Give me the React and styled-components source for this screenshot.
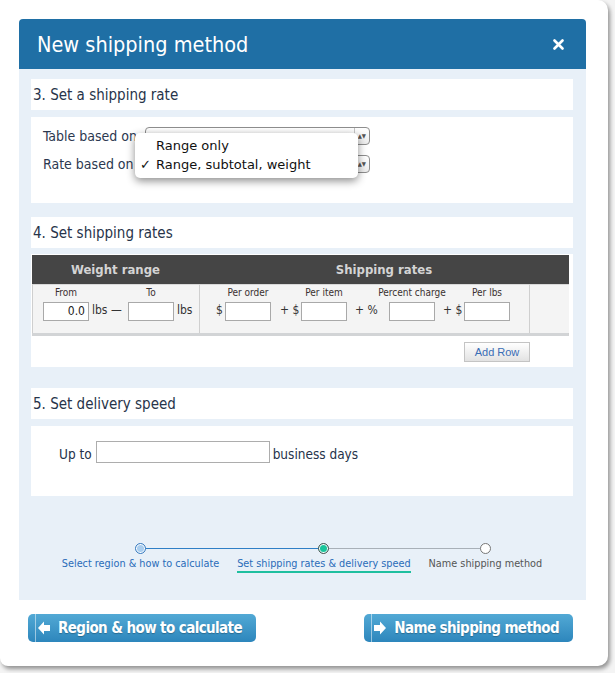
import React from 'react';
import styled, { createGlobalStyle } from 'styled-components';

const GlobalStyle = createGlobalStyle`
  html, body {
    margin: 0;
    padding: 0;
    background: #ececec;
  }
  * {
    box-sizing: border-box;
  }
`;

const UI_FONT = `"DejaVu Sans Condensed", "DejaVu Sans", "Liberation Sans", sans-serif`;

const Page = styled.div`
  position: relative;
  width: 615px;
  height: 673px;
  overflow: hidden;
  background: #f4f4f4;
  font-family: ${UI_FONT};
`;

const Modal = styled.div`
  width: 608px;
  height: 666px;
  background: #fff;
  border-radius: 0 10px 10px 8px;
  box-shadow: 2px 3px 4px rgba(0, 0, 0, 0.4);
  padding: 19px 22px 0 19px;
  display: flex;
  flex-direction: column;
`;

const Header = styled.div`
  height: 50px;
  background: #1f6fa5;
  border-radius: 4px 4px 0 0;
  display: flex;
  align-items: center;
  justify-content: space-between;
  padding: 0 22px 0 18px;
  color: #fff;
`;

const Title = styled.h1`
  margin: 0;
  font-size: 21.5px;
  font-weight: normal;
`;

const Body = styled.div`
  background: #e8f0f8;
  height: 531px;
  padding: 10px 13px 0 12px;
  display: flex;
  flex-direction: column;
`;

const SectionTitle = styled.div`
  background: #fff;
  height: 31px;
  padding-left: 2px;
  display: flex;
  align-items: center;
  font-size: 15px;
  color: #27344a;
  margin-top: ${(p) => p.$top || 0}px;
`;

const SectionBody = styled.div`
  position: relative;
  background: #fff;
  height: ${(p) => p.$height}px;
  margin-top: ${(p) => p.$top || 7}px;
`;

const FormGrid = styled.div`
  display: grid;
  grid-template-columns: 102px 225px;
  row-gap: 10px;
  padding: 10px 0 0 12px;
  align-items: center;
  font-size: 14px;
  color: #2b3850;
`;

const SelectBox = styled.div`
  height: 18px;
  border: 1px solid #8e8e8e;
  border-radius: 4px;
  background: linear-gradient(#ffffff, #ececec);
  display: flex;
  align-items: center;
  padding: 0 2px 0 8px;
`;

const Arrows = styled.span`
  margin-left: auto;
  font-size: 6px;
  line-height: 6px;
  color: #555;
  display: flex;
  flex-direction: column;
  align-items: center;
  justify-content: center;
  border-left: 1px solid #c4c4c4;
  padding: 0 1px 0 3px;
  height: 100%;
`;

const Popup = styled.div`
  position: absolute;
  left: 104px;
  top: 16px;
  width: 223px;
  height: 45px;
  background: #fff;
  border-radius: 5px;
  box-shadow: 0 3px 9px rgba(0, 0, 0, 0.45);
  padding-top: 3px;
  font-family: "DejaVu Sans", "Liberation Sans", sans-serif;
  font-size: 13px;
  color: #111;
`;

const PopItem = styled.div`
  height: 19px;
  display: flex;
  align-items: center;
  padding-left: 5px;
`;

const Check = styled.span`
  width: 16px;
  display: inline-block;
`;

const Table = styled.div`
  display: grid;
  grid-template-columns: 167px 330px 40px;
  margin: 1px 4px 0 1px;
  border-right: 1px solid #cfcfcf;
  border-bottom: 3px solid #d2d4d6;
`;

const HeadCell = styled.div`
  grid-column: ${(p) => p.$span || 'auto'};
  background: #454545;
  color: #d4d4d4;
  height: 29px;
  display: flex;
  align-items: center;
  justify-content: center;
  font-size: 13px;
  font-weight: bold;
`;

const RowCell = styled.div`
  background: #f4f4f4;
  height: 49px;
  border-left: 1px solid #cfcfcf;
  border-top: 1px solid #d8d8d8;
  display: flex;
  align-items: flex-end;
  padding: 0 0 12px ${(p) => p.$padLeft || 0}px;
  font-size: 12px;
  color: #333;
`;

const Field = styled.div`
  display: flex;
  flex-direction: column;
  align-items: center;
  gap: 4px;
`;

const SubLabel = styled.span`
  font-size: 10px;
  color: #3a3030;
  white-space: nowrap;
  width: 46px;
  display: flex;
  justify-content: center;
`;

const SmallInput = styled.div`
  width: 46px;
  height: 19px;
  border: 1px solid #a9a9a9;
  background: #fff;
  font-size: 12px;
  text-align: right;
  padding-right: 3px;
  line-height: 17px;
  color: #222;
`;

const Joiner = styled.span`
  width: ${(p) => p.$w}px;
  height: 19px;
  line-height: 17px;
  padding-left: ${(p) => p.$pl || 0}px;
  white-space: nowrap;
  font-size: 12px;
`;

const AddRow = styled.div`
  margin: 6px 43px 0 auto;
  width: 66px;
  height: 20px;
  border: 1px solid #c4c4c4;
  background: linear-gradient(#ffffff, #e2e2e2);
  color: #3a6db5;
  font-family: "Liberation Sans", sans-serif;
  font-size: 11px;
  display: flex;
  align-items: center;
  justify-content: center;
`;

const DeliveryRow = styled.div`
  display: flex;
  align-items: flex-end;
  padding: 15px 0 0 28px;
  font-size: 13.5px;
  color: #25324a;
  gap: 3px;
`;

const DeliveryText = styled.span`
  line-height: 16px;
  padding-bottom: 1px;
`;

const WideInput = styled.div`
  width: 174px;
  height: 22px;
  border: 1px solid #adadad;
  background: #fff;
  margin-left: 1px;
`;

const Stepper = styled.div`
  display: flex;
  justify-content: center;
  margin-top: 47px;
`;

const Step = styled.div`
  position: relative;
  display: flex;
  flex-direction: column;
  align-items: center;
  padding: 0 9px;
  &::before,
  &::after {
    content: '';
    position: absolute;
    top: 5px;
    height: 1px;
    width: 50%;
  }
  &::before {
    left: 0;
    background: ${(p) => p.$leftLine || 'transparent'};
  }
  &::after {
    right: 0;
    background: ${(p) => p.$rightLine || 'transparent'};
  }
`;

const Dot = styled.span`
  position: relative;
  z-index: 1;
  width: 11px;
  height: 11px;
  border-radius: 50%;
  border: 1px solid ${(p) => p.$ring};
  background: ${(p) => p.$fill};
  box-shadow: inset 0 0 0 1px #fff;
`;

const StepLabel = styled.span`
  margin-top: 3px;
  font-size: 10.8px;
  color: ${(p) => p.$color};
  white-space: nowrap;
  padding-bottom: 1px;
  border-bottom: 2px solid ${(p) => (p.$active ? '#1fbf9f' : 'transparent')};
`;

const Footer = styled.div`
  display: flex;
  justify-content: space-between;
  padding: 14px 13px 0 9px;
`;

const NavButton = styled.div`
  position: relative;
  height: 28px;
  padding: 0 14px 0 10px;
  border-radius: 5px;
  background: linear-gradient(#52a9d5, #2d86bc);
  color: #fff;
  font-size: 15px;
  font-weight: bold;
  letter-spacing: -0.6px;
  display: flex;
  align-items: center;
  gap: 8px;
  text-shadow: 0 1px 1px rgba(0, 0, 0, 0.25);
  &::before {
    content: '';
    position: absolute;
    left: 7px;
    top: 0;
    bottom: 0;
    width: 1px;
    background: rgba(255, 255, 255, 0.5);
  }
`;

const CloseIcon = () => (
  <svg width="11" height="11" viewBox="0 0 11 11">
    <path d="M1.5 1.5 L9.5 9.5 M9.5 1.5 L1.5 9.5" stroke="#fff" strokeWidth="2.6" strokeLinecap="round" />
  </svg>
);

const ArrowIcon = ({ dir }) => (
  <svg width="12" height="14" viewBox="0 0 12 14" style={{ transform: dir === 'right' ? 'scaleX(-1)' : 'none' }}>
    <path d="M0 7 L6 0.5 L6 4 L12 4 L12 10 L6 10 L6 13.5 Z" fill="#fff" />
  </svg>
);

const App = () => (
  <>
    <GlobalStyle />
    <Page>
      <Modal>
        <Header>
          <Title>New shipping method</Title>
          <CloseIcon />
        </Header>
        <Body>
          <SectionTitle>3. Set a shipping rate</SectionTitle>
          <SectionBody $height={86}>
            <FormGrid>
              <span>Table based on</span>
              <SelectBox>
                <Arrows>▲▼</Arrows>
              </SelectBox>
              <span>Rate based on</span>
              <SelectBox>
                <Arrows>▲▼</Arrows>
              </SelectBox>
            </FormGrid>
            <Popup>
              <PopItem>
                <Check />
                Range only
              </PopItem>
              <PopItem>
                <Check>✓</Check>
                Range, subtotal, weight
              </PopItem>
            </Popup>
          </SectionBody>

          <SectionTitle $top={14}>4. Set shipping rates</SectionTitle>
          <SectionBody $height={113} $top={6}>
            <Table>
              <HeadCell>Weight range</HeadCell>
              <HeadCell $span="span 2">Shipping rates</HeadCell>
              <RowCell $padLeft={10}>
                <Field>
                  <SubLabel>From</SubLabel>
                  <SmallInput>0.0</SmallInput>
                </Field>
                <Joiner $w={39} $pl={3}>lbs —</Joiner>
                <Field>
                  <SubLabel>To</SubLabel>
                  <SmallInput />
                </Field>
                <Joiner $w={20} $pl={3}>lbs</Joiner>
              </RowCell>
              <RowCell $padLeft={16}>
                <Joiner $w={9}>$</Joiner>
                <Field>
                  <SubLabel>Per order</SubLabel>
                  <SmallInput />
                </Field>
                <Joiner $w={30} $pl={9}>+ $</Joiner>
                <Field>
                  <SubLabel>Per item</SubLabel>
                  <SmallInput />
                </Field>
                <Joiner $w={42} $pl={8}>+ %</Joiner>
                <Field>
                  <SubLabel>Percent charge</SubLabel>
                  <SmallInput />
                </Field>
                <Joiner $w={29} $pl={8}>+ $</Joiner>
                <Field>
                  <SubLabel>Per lbs</SubLabel>
                  <SmallInput />
                </Field>
              </RowCell>
              <RowCell />
            </Table>
            <AddRow>Add Row</AddRow>
          </SectionBody>

          <SectionTitle $top={21}>5. Set delivery speed</SectionTitle>
          <SectionBody $height={70}>
            <DeliveryRow>
              <DeliveryText>Up to</DeliveryText>
              <WideInput />
              <DeliveryText>business days</DeliveryText>
            </DeliveryRow>
          </SectionBody>

          <Stepper>
            <Step $rightLine="#2f7fc6">
              <Dot $ring="#3a7cc0" $fill="#a9cdee" />
              <StepLabel $color="#2a6cb8">Select region &amp; how to calculate</StepLabel>
            </Step>
            <Step $leftLine="#2f7fc6" $rightLine="#a8b0b8">
              <Dot $ring="#555" $fill="#19c49b" />
              <StepLabel $color="#2a6cb8" $active>
                Set shipping rates &amp; delivery speed
              </StepLabel>
            </Step>
            <Step $leftLine="#a8b0b8">
              <Dot $ring="#777" $fill="#fff" />
              <StepLabel $color="#555">Name shipping method</StepLabel>
            </Step>
          </Stepper>
        </Body>
        <Footer>
          <NavButton>
            <ArrowIcon dir="left" />
            Region &amp; how to calculate
          </NavButton>
          <NavButton>
            <ArrowIcon dir="right" />
            Name shipping method
          </NavButton>
        </Footer>
      </Modal>
    </Page>
  </>
);

export default App;
